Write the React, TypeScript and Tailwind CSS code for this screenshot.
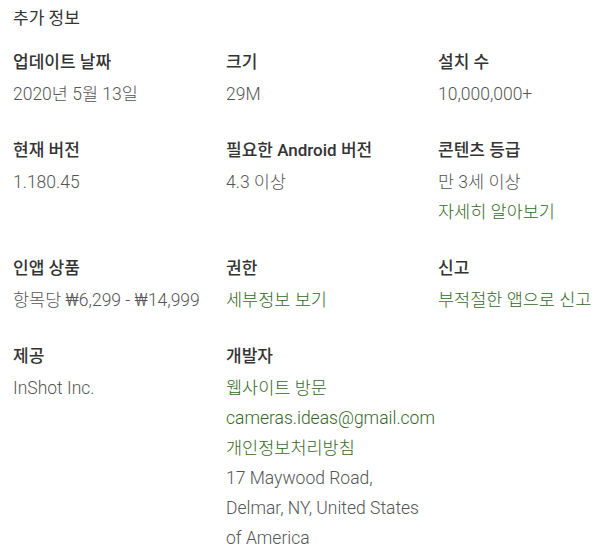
import React from "react";

const font = { fontFamily: "Roboto, 'Noto Sans CJK KR', Arial, sans-serif" };

function Label({ children }: { children: React.ReactNode }) {
  return <div className="text-[17px] leading-[30px] font-medium text-[#333333] mb-[2px]">{children}</div>;
}
function Val({ children }: { children: React.ReactNode }) {
  return <div className="text-[17.5px] leading-[30px] font-light text-[#555555]">{children}</div>;
}
function Link({ children }: { children: React.ReactNode }) {
  return <div className="text-[17.5px] leading-[30px] font-light text-[#33691e]">{children}</div>;
}

export default function App() {
  return (
    <div className="bg-white w-[605px] h-[555px] px-[13px] pt-[3px]" style={font}>
      <div className="text-[17px] leading-[30px] font-normal text-[#333333]">추가 정보</div>
      <div className="grid grid-cols-[213px_212px_1fr] gap-y-[26px] mt-[14px]">
        <div><Label>업데이트 날짜</Label><Val>2020년 5월 13일</Val></div>
        <div><Label>크기</Label><Val>29M</Val></div>
        <div><Label>설치 수</Label><Val>10,000,000+</Val></div>

        <div><Label>현재 버전</Label><Val>1.180.45</Val></div>
        <div><Label>필요한 Android 버전</Label><Val>4.3 이상</Val></div>
        <div><Label>콘텐츠 등급</Label><Val>만 3세 이상</Val><Link>자세히 알아보기</Link></div>

        <div><Label>인앱 상품</Label><Val>항목당 ₩6,299 - ₩14,999</Val></div>
        <div><Label>권한</Label><Link>세부정보 보기</Link></div>
        <div><Label>신고</Label><Link>부적절한 앱으로 신고</Link></div>

        <div><Label>제공</Label><Val>InShot Inc.</Val></div>
        <div className="col-span-2">
          <Label>개발자</Label>
          <Link>웹사이트 방문</Link>
          <Link>cameras.ideas@gmail.com</Link>
          <Link>개인정보처리방침</Link>
          <div className="w-[205px]"><Val>17 Maywood Road, Delmar, NY, United States of America</Val></div>
        </div>
      </div>
    </div>
  );
}
